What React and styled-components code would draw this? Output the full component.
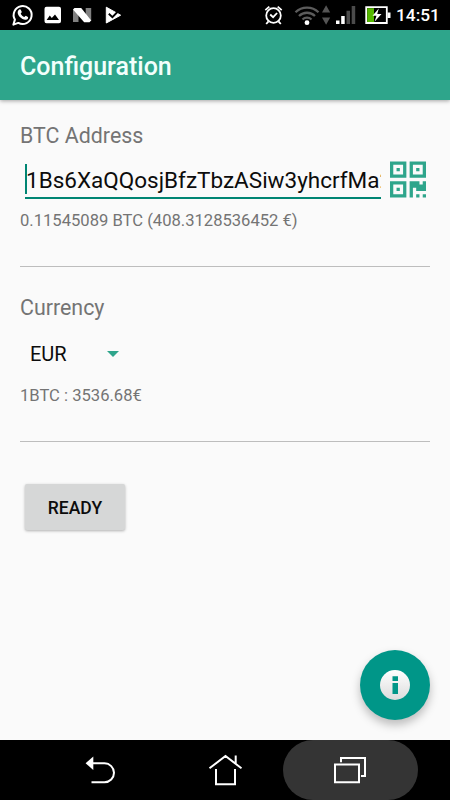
import React from 'react';
import styled, {createGlobalStyle, ThemeProvider} from 'styled-components';

const theme = {
  colors: {
    primary: '#2ea58b',
    accent: '#009688',
    underline: '#008573',
    background: '#fafafa',
    text: '#0c0c0c',
    muted: '#747474',
    divider: '#bdbdbd',
    button: '#d6d7d7',
    navActive: '#343434',
  }
}

const GlobalStyle = createGlobalStyle`
  * {
    box-sizing: border-box;
  }

  body {
    margin: 0;
    font-family: Roboto, 'Liberation Sans', sans-serif;
  }
`

const Screen = styled.div`
  position: relative;
  display: flex;
  flex-direction: column;
  width: 450px;
  height: 800px;
  overflow: hidden;
  background: ${props => props.theme.colors.background};
`

const StatusBar = styled.div`
  display: flex;
  justify-content: space-between;
  height: 30px;
  background: #000;
`

const Clock = styled.span`
  width: 54px;
  font-size: 17.3px;
  font-weight: 500;
  line-height: 31px;
  color: #fff;
  white-space: nowrap;
`

const StatusGroup = styled.div`
  display: flex;
`

const Toolbar = styled.header`
  height: 70px;
  padding: 2px 20px 0;
  background: ${props => props.theme.colors.primary};
  box-shadow: 0 1px 4px rgba(0, 0, 0, .35);
`

const Title = styled.h1`
  margin: 0;
  font-size: 25px;
  font-weight: 500;
  line-height: 70px;
  color: #f2fffc;
`

const Content = styled.main`
  flex: 1;
  padding: 20px 20px 0;
`

const Section = styled.section`
  height: ${props => props.height};
  margin-bottom: ${props => props.gap};
  border-bottom: 1px solid ${props => props.theme.colors.divider};
`

const Label = styled.h2`
  height: 30px;
  margin: 0;
  font-size: 21.4px;
  font-weight: 400;
  line-height: 32px;
  color: ${props => props.theme.colors.muted};
`

const Hint = styled.p`
  margin: 0;
  font-size: 16.6px;
  line-height: 25px;
  color: ${props => props.theme.colors.muted};
`

const AddressRow = styled.div`
  display: flex;
  height: 58px;
  padding: 11px 4px 0 5px;
`

const AddressField = styled.div`
  width: 356px;
  height: 38px;
  margin-right: 9px;
  padding-top: 3px;
  border-bottom: 2px solid ${props => props.theme.colors.underline};
`

const AddressValue = styled.div`
  height: 30px;
  overflow: hidden;
  border-left: 2px solid ${props => props.theme.colors.underline};
  font-size: 22.5px;
  line-height: 33px;
  color: ${props => props.theme.colors.text};
  white-space: nowrap;

  span {
    margin-left: -1px;
  }
`

const Spinner = styled.div`
  display: flex;
  align-items: center;
  justify-content: space-between;
  width: 99px;
  height: 61px;
  padding: 3px 0 0 10px;
  font-size: 20px;
  color: ${props => props.theme.colors.text};
`

const ReadyButton = styled.button`
  display: block;
  width: 100px;
  height: 46px;
  margin-left: 5px;
  padding: 2px 0 0;
  border: 0;
  border-radius: 2px;
  background: ${props => props.theme.colors.button};
  box-shadow: 0 1px 3px rgba(0, 0, 0, .3);
  font-family: inherit;
  font-size: 17.5px;
  font-weight: 500;
  color: ${props => props.theme.colors.text};
`

const InfoFab = styled.button`
  position: absolute;
  right: 20px;
  bottom: 80px;
  display: flex;
  align-items: center;
  justify-content: center;
  width: 70px;
  height: 70px;
  padding: 0;
  border: 0;
  border-radius: 50%;
  background: ${props => props.theme.colors.accent};
  box-shadow: 0 5px 10px rgba(0, 0, 0, .25);
`

const NavBar = styled.nav`
  display: flex;
  height: 60px;
  padding-left: 34px;
  background: #000;
`

const NavItem = styled.div`
  display: flex;
  align-items: center;
  justify-content: center;
  width: ${props => props.width};
  border-radius: 30px;
  background: ${props => props.$active ? props.theme.colors.navActive : 'transparent'};
`

const NotificationIcons = () => (
  <svg width='130' height='30' viewBox='0 0 130 30'>
    {/* whatsapp */}
    <path d='M13.4 24.6 14.9 19.6A9 9 0 1 1 18.3 22.9Z' fill='none' stroke='#fff' strokeWidth='2' strokeLinejoin='round' />
    <path d='M19.3 9.6c.8-.5 1.4-.2 1.7.6l.7 1.6c.2.7-.7 1.3-1 1.9.8 1.6 2 2.7 3.6 3.4.6-.4 1.2-1.6 1.9-1.2l1.7 1c.7.5-.1 2.3-1.2 2.7-2.1.9-5-.6-6.8-2.5-2-2.1-3.5-5.3-.6-7.5Z' fill='#fff' />
    {/* picture */}
    <path fillRule='evenodd' d='M46.500 6.800h12.500a2 2 0 0 1 2 2v12.400a2 2 0 0 1-2 2h-12.500a2 2 0 0 1-2-2v-12.400a2 2 0 0 1 2-2ZM46.600 20h12.400l-4-5.400-3.200 3.400-2-2.400Z' fill='#fff' />
    {/* android N */}
    <path d='M73 9.500h5.500v12.500h-5.500ZM85.700 8h5.500v13h-5.500Z' fill='#808080' />
    <path d='M74.500 8h6.700L91.200 20.500l-1.700 1.700h-5.300L73 9.500Z' fill='#fff' />
    {/* play protect */}
    <path d='M106.300 7.200 120.600 15.200 106.300 23Z' fill='#fff' stroke='#fff' strokeWidth='1' strokeLinejoin='round' />
    <path d='m108.800 13.700 3.600 3.500 6.500-6.700' fill='none' stroke='#000' strokeWidth='1.900' />
  </svg>
)

const SystemIcons = () => (
  <svg width='136' height='30' viewBox='260 0 136 30'>
    {/* alarm */}
    <circle cx='273.500' cy='15.500' r='7.300' fill='none' stroke='#fff' strokeWidth='1.800' />
    <path d='m265.300 10.200 4-3.600M281.700 10.200l-4-3.600M268.500 21.300l-2.300 2.700M278.500 21.300l2.300 2.700M270.200 14.500l2.900 2.700 4-4.200' fill='none' stroke='#fff' strokeWidth='1.800' />
    {/* wifi */}
    <path d='M295.500 12.200a16.500 16.500 0 0 1 23 0M299 16a11.500 11.500 0 0 1 16 0M302.500 19.500a6.500 6.500 0 0 1 9 0' fill='none' stroke='#5c5c5c' strokeWidth='2.300' />
    <circle cx='307' cy='22.700' r='2.400' fill='#fff' />
    <path d='M322 12.500 326.100 5.300 330.200 12.500ZM322 17.500h8.200L326.100 24.700Z' fill='#555' />
    {/* signal */}
    <path d='M336 20.500h3.500v3.500h-3.500ZM341.200 16h3.500v8h-3.500Z' fill='#fff' />
    <path d='M346.500 10.800h3.500v13.200h-3.500ZM351.700 6h3.500v18h-3.500Z' fill='#4b4b4b' />
    {/* battery */}
    <path d='M366.200 7.200h20.600v15.800h-20.600Z' fill='#000' stroke='#fff' strokeWidth='1.800' />
    <path d='M367.200 8.200h6.800v13.800h-6.800Z' fill='#55b800' />
    <path d='M387.500 12.500h3v5.500h-3Z' fill='#fff' />
    <path d='m378.800 8.500-6.300 7.200h4l-2 6 7-7.800h-4.300Z' fill='#fff' />
  </svg>
)

// 11x11 modules, three finder squares and the data corner
const QrIcon = () => (
  <svg width='37' height='37' viewBox='0 0 11 11'>
    <path
      fill={theme.colors.primary}
      fillRule='evenodd'
      d='M0 0h5v5H0ZM1 1v3h3V1ZM2 2h1v1H2ZM6 0h5v5H6ZM7 1v3h3V1ZM8 2h1v1H8ZM0 6h5v5H0ZM1 7v3h3V7ZM2 8h1v1H2ZM6 6h3v1h1V6h1v3H8V8H7v3H6ZM8 10h1v1H8ZM10 10h1v1h-1Z'
    />
  </svg>
)

const InfoIcon = () => (
  <svg width='30' height='30' viewBox='0 0 30 30'>
    <defs>
      <linearGradient id='info' x1='0' y1='0' x2='0' y2='1'>
        <stop offset='0' stopColor='#fff' />
        <stop offset='1' stopColor='#dcdcdc' />
      </linearGradient>
    </defs>
    <circle cx='15' cy='15' r='15' fill='url(#info)' />
    <path d='M12.500 6.300h5.500v4.700h-5.500ZM12.500 13h5.500v11h-5.500Z' fill={theme.colors.accent} />
  </svg>
)

const BackIcon = () => (
  <svg width='30' height='30' viewBox='85 755 30 30'>
    <path d='M92 763.300h12.500a9.500 9.500 0 0 1 0 19H91.500' fill='none' stroke='#fff' strokeWidth='2' />
    <path d='M85.600 763.300 93.300 756.500V770Z' fill='#fff' />
  </svg>
)

const HomeIcon = () => (
  <svg width='35' height='32' viewBox='207 754 35 32'>
    <path d='m209.500 768.300 16-12.300 16 12.300M235.700 755.500v8M216 769v15.300h19V769' fill='none' stroke='#fff' strokeWidth='2' />
  </svg>
)

const RecentIcon = () => (
  <svg width='35' height='28' viewBox='333 756 35 28'>
    <path d='M335 764.500h24v17.700h-24ZM341 762.200v-4.200h24v18h-4' fill='none' stroke='#fff' strokeWidth='2' />
  </svg>
)

const App = () => (
  <ThemeProvider theme={theme}>
    <GlobalStyle />
    <Screen>
      <StatusBar>
        <NotificationIcons />
        <StatusGroup>
          <SystemIcons />
          <Clock>14:51</Clock>
        </StatusGroup>
      </StatusBar>
      <Toolbar>
        <Title>Configuration</Title>
      </Toolbar>
      <Content>
        <Section height='147px' gap='25px'>
          <Label>BTC Address</Label>
          <AddressRow>
            <AddressField>
              <AddressValue><span>1Bs6XaQQosjBfzTbzASiw3yhcrfMa2</span></AddressValue>
            </AddressField>
            <QrIcon />
          </AddressRow>
          <Hint>0.11545089 BTC (408.3128536452 €)</Hint>
        </Section>
        <Section height='150px' gap='42px'>
          <Label>Currency</Label>
          <Spinner>
            EUR
            <svg width='12' height='6' viewBox='0 0 12 6'>
              <path d='M0 0h12L6 6Z' fill={theme.colors.primary} />
            </svg>
          </Spinner>
          <Hint>1BTC : 3536.68€</Hint>
        </Section>
        <ReadyButton>READY</ReadyButton>
      </Content>
      <InfoFab aria-label='Info'>
        <InfoIcon />
      </InfoFab>
      <NavBar>
        <NavItem width='132px'><BackIcon /></NavItem>
        <NavItem width='117px'><HomeIcon /></NavItem>
        <NavItem width='135px' $active><RecentIcon /></NavItem>
      </NavBar>
    </Screen>
  </ThemeProvider>
)

export default App
